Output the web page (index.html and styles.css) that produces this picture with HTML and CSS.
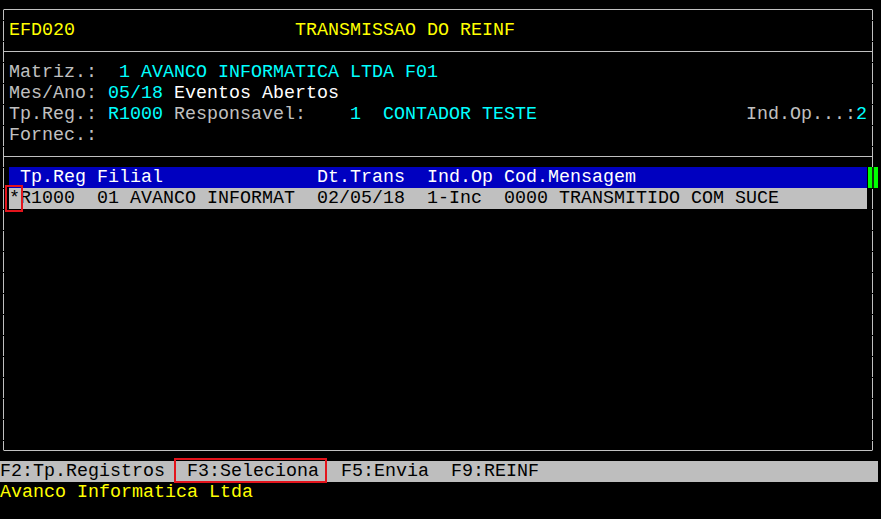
FILE: index.html
```html
<!DOCTYPE html>
<html lang="pt">
<head>
    <meta charset="UTF-8">
    <title>EFD020 - Transmissao do REINF</title>
    <link rel="stylesheet" href="styles.css">
</head>
<body>
<div class="screen">
    <div class="box">
        <div class="row yel">EFD020                    TRANSMISSAO DO REINF</div>
        <div class="sep"></div>
        <div class="row">Matriz.:<span class="cyan">  1 AVANCO INFORMATICA LTDA F01</span></div>
        <div class="row">Mes/Ano: <span class="cyan">05/18</span><span class="white"> Eventos Abertos</span></div>
        <div class="row split"><span>Tp.Reg.: <span class="cyan">R1000</span> Responsavel:<span class="cyan">    1  CONTADOR TESTE</span></span><span>Ind.Op...:<span class="cyan">2</span></span></div>
        <div class="row">Fornec.:</div>
        <div class="sep"></div>
        <div class="list">
            <div class="row head"> Tp.Reg Filial              Dt.Trans  Ind.Op Cod.Mensagem<span class="scroll"></span></div>
            <div class="row data">*R1000  01 AVANCO INFORMAT  02/05/18  1-Inc  0000 TRANSMITIDO COM SUCE<span class="mark mark-star"></span></div>
        </div>
    </div>
    <div class="row status">F2:Tp.Registros  F3:Seleciona  F5:Envia  F9:REINF<span class="mark mark-key"></span></div>
    <div class="row yel footer">Avanco Informatica Ltda</div>
</div>
</body>
</html>
```

FILE: styles.css
```css
*{
    box-sizing: border-box;
}
body{
    margin: 0;
    background: #000000;
}
.screen{
    display: flow-root;
    width: 880px;
    margin: -1px 0 0 -2px;
    font-family: "Liberation Mono", "Courier New", monospace;
    font-size: 18.333px;
    line-height: 21px;
    color: #c0c0c0;
}
/* moldura: linhas verticais com pequenas falhas entre as linhas do terminal */
.box{
    width: 870px;
    margin: 10px 0 10px 5px;
    padding: 10px 5px;
    border: 1px solid transparent;
    border-top-color: #c0c0c0;
    border-bottom-color: #c0c0c0;
    background-image: linear-gradient(#c0c0c0 20px, #000000 20px), linear-gradient(#c0c0c0 20px, #000000 20px);
    background-size: 1px 21px, 1px 21px;
    background-position: left 0 top 12px, right 0 top 12px;
    background-repeat: repeat-y;
    background-origin: border-box;
    background-clip: border-box;
}
.row{
    height: 21px;
    white-space: pre;
}
.split{
    display: flex;
    justify-content: space-between;
}
.sep{
    height: 11px;
    margin: 0 -5px 10px;
    border-bottom: 1px solid #c0c0c0;
}
.list{
    height: 273px;
}
.yel{
    color: #ffff00;
}
.cyan{
    color: #00ffff;
}
.white{
    color: #ffffff;
}
.head{
    position: relative;
    background: #0000c0;
    color: #ffffff;
}
.scroll{
    position: absolute;
    left: 859px;
    top: 0;
    width: 10px;
    height: 21px;
    background: linear-gradient(to right, #00ff00 0, #00ff00 4px, #103010 4px, #103010 6px, #00ff00 6px);
}
.data{
    position: relative;
    background: #c0c0c0;
    color: #000000;
}
.status{
    position: relative;
    width: 878px;
    margin-left: 2px;
    background: #bebebe;
    color: #000000;
}
.footer{
    margin-left: 2px;
}
.mark{
    position: absolute;
    border: 2px solid #e3141c;
}
.mark-star{
    left: -4px;
    top: -3px;
    width: 18px;
    height: 27px;
}
.mark-key{
    left: 174px;
    top: -3px;
    width: 153px;
    height: 25px;
}
```
